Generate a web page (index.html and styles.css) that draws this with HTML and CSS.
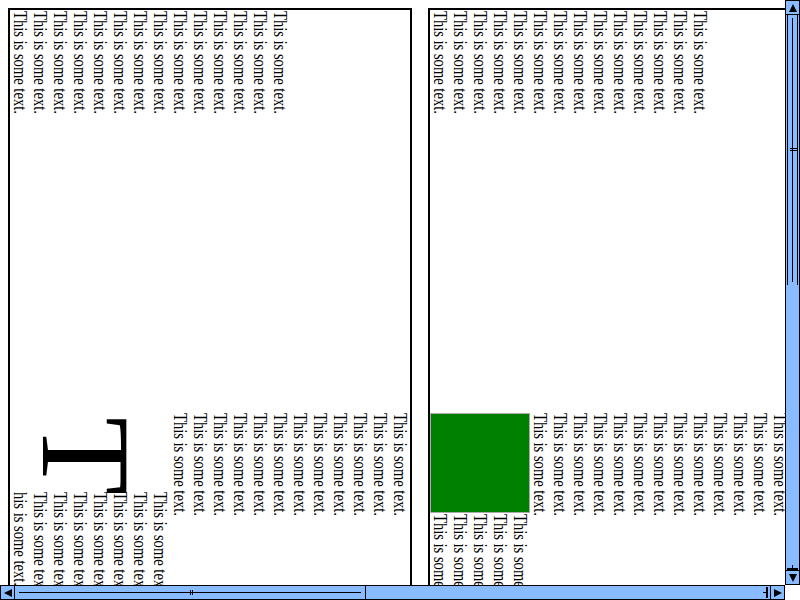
FILE: index.html
```html
<!DOCTYPE html>
<html>
<head>
<meta charset="utf-8">
<link rel="stylesheet" href="styles.css">
</head>
<body>
<div class="page">
  <div class="box box-left">
    <div class="sect-a">
      <div class="line"><span>This is some text.</span></div>
      <div class="line"><span>This is some text.</span></div>
      <div class="line"><span>This is some text.</span></div>
      <div class="line"><span>This is some text.</span></div>
      <div class="line"><span>This is some text.</span></div>
      <div class="line"><span>This is some text.</span></div>
      <div class="line"><span>This is some text.</span></div>
      <div class="line"><span>This is some text.</span></div>
      <div class="line"><span>This is some text.</span></div>
      <div class="line"><span>This is some text.</span></div>
      <div class="line"><span>This is some text.</span></div>
      <div class="line"><span>This is some text.</span></div>
      <div class="line"><span>This is some text.</span></div>
      <div class="line"><span>This is some text.</span></div>
    </div>
    <div class="sect-b">
      <div class="cap-group">
        <div class="cap"><span>T</span></div>
        <div class="beside">
          <div class="line"><span>his is some text.</span></div>
          <div class="line"><span>This is some text.</span></div>
          <div class="line"><span>This is some text.</span></div>
          <div class="line"><span>This is some text.</span></div>
          <div class="line"><span>This is some text.</span></div>
          <div class="line"><span>This is some text.</span></div>
          <div class="line"><span>This is some text.</span></div>
          <div class="line"><span>This is some text.</span></div>
        </div>
      </div>
      <div class="line"><span>This is some text.</span></div>
      <div class="line"><span>This is some text.</span></div>
      <div class="line"><span>This is some text.</span></div>
      <div class="line"><span>This is some text.</span></div>
      <div class="line"><span>This is some text.</span></div>
      <div class="line"><span>This is some text.</span></div>
      <div class="line"><span>This is some text.</span></div>
      <div class="line"><span>This is some text.</span></div>
      <div class="line"><span>This is some text.</span></div>
      <div class="line"><span>This is some text.</span></div>
      <div class="line"><span>This is some text.</span></div>
      <div class="line"><span>This is some text.</span></div>
    </div>
  </div>
  <div class="box box-right">
    <div class="sect-a">
      <div class="line"><span>This is some text.</span></div>
      <div class="line"><span>This is some text.</span></div>
      <div class="line"><span>This is some text.</span></div>
      <div class="line"><span>This is some text.</span></div>
      <div class="line"><span>This is some text.</span></div>
      <div class="line"><span>This is some text.</span></div>
      <div class="line"><span>This is some text.</span></div>
      <div class="line"><span>This is some text.</span></div>
      <div class="line"><span>This is some text.</span></div>
      <div class="line"><span>This is some text.</span></div>
      <div class="line"><span>This is some text.</span></div>
      <div class="line"><span>This is some text.</span></div>
      <div class="line"><span>This is some text.</span></div>
      <div class="line"><span>This is some text.</span></div>
    </div>
    <div class="sect-b">
      <div class="float-group">
        <div class="green"></div>
        <div class="beside">
          <div class="line"><span>This is some text.</span></div>
          <div class="line"><span>This is some text.</span></div>
          <div class="line"><span>This is some text.</span></div>
          <div class="line"><span>This is some text.</span></div>
          <div class="line"><span>This is some text.</span></div>
        </div>
      </div>
      <div class="line"><span>This is some text.</span></div>
      <div class="line"><span>This is some text.</span></div>
      <div class="line"><span>This is some text.</span></div>
      <div class="line"><span>This is some text.</span></div>
      <div class="line"><span>This is some text.</span></div>
      <div class="line"><span>This is some text.</span></div>
      <div class="line"><span>This is some text.</span></div>
      <div class="line"><span>This is some text.</span></div>
      <div class="line"><span>This is some text.</span></div>
      <div class="line"><span>This is some text.</span></div>
      <div class="line"><span>This is some text.</span></div>
      <div class="line"><span>This is some text.</span></div>
      <div class="line"><span>This is some text.</span></div>
      <div class="line"><span>This is some text.</span></div>
    </div>
  </div>
</div>

<div class="vscroll">
  <div class="arrow arrow-up"></div>
  <div class="vtrack">
    <div class="vthumb"><div class="vgrip"></div></div>
    <div class="vtail"><div class="vend"></div></div>
  </div>
  <div class="arrow arrow-down"></div>
</div>
<div class="hscroll">
  <div class="arrow arrow-left"></div>
  <div class="htrack">
    <div class="hthumb"><div class="hgrip"></div></div>
    <div class="htail"><div class="hend"></div></div>
  </div>
  <div class="arrow arrow-right"></div>
</div>
<div class="corner"></div>
</body>
</html>
```
FILE: styles.css
```css
html, body {
  margin: 0;
  padding: 0;
  overflow: hidden;
  background: #fff;
  width: 800px;
  height: 600px;
}
.page {
  display: flex;
  gap: 16px;
  padding: 8px;
  align-items: flex-start;
}
.box {
  border: 2px solid #000;
  height: 600px;
  flex: none;
  overflow: hidden;
}
.box-left { width: 400px; }
.box-right { width: 900px; }

.sect-a {
  display: flex;
  height: 402px;
}
.sect-b {
  display: flex;
  height: 200px;
}
.line {
  width: 20px;
  flex: none;
  height: 110px;
  padding-top: 1px;
}
.line span {
  display: block;
  writing-mode: vertical-lr;
  font-family: "Liberation Serif", serif;
  font-size: 18px;
  line-height: 20px;
  white-space: nowrap;
  color: #000;
  transform: scaleY(0.81);
  transform-origin: 0 0;
}
.cap-group {
  width: 160px;
  flex: none;
  display: flex;
  flex-direction: column;
}
.cap {
  height: 79px;
  flex: none;
}
.cap span {
  display: block;
  writing-mode: vertical-lr;
  font-family: "Liberation Serif", serif;
  font-size: 128px;
  line-height: 152px;
  color: #000;
  margin-top: 5px;
}
.beside {
  display: flex;
  flex: none;
}
.float-group {
  width: 100px;
  flex: none;
  display: flex;
  flex-direction: column;
}
.green {
  flex: none;
  width: 98px;
  height: 98px;
  margin-top: 1px;
  background: #008000;
  border: 1px solid #aaa;
}

/* scrollbars */
.vscroll {
  position: fixed;
  right: 0;
  top: 0;
  width: 15px;
  height: 585px;
  display: flex;
  flex-direction: column;
  background: #88bbff;
}
.hscroll {
  position: fixed;
  left: 0;
  bottom: 0;
  width: 785px;
  height: 15px;
  display: flex;
  background: #88bbff;
}
.corner {
  position: fixed;
  right: 0;
  bottom: 0;
  width: 15px;
  height: 15px;
  background: #fff;
}
.arrow {
  flex: none;
  width: 15px;
  height: 15px;
  box-sizing: border-box;
  border: 1px solid #000;
  background: #88bbff;
  position: relative;
}
.arrow::after {
  content: "";
  position: absolute;
  left: 50%;
  top: 50%;
  width: 0;
  height: 0;
}
.arrow-up::after {
  margin: -4px 0 0 -4px;
  border-left: 4px solid transparent;
  border-right: 4px solid transparent;
  border-bottom: 8px solid #000;
}
.arrow-down::after {
  margin: -4px 0 0 -4px;
  border-left: 4px solid transparent;
  border-right: 4px solid transparent;
  border-top: 8px solid #000;
}
.arrow-left::after {
  margin: -4px 0 0 -4px;
  border-top: 4px solid transparent;
  border-bottom: 4px solid transparent;
  border-right: 8px solid #000;
}
.arrow-right::after {
  margin: -4px 0 0 -4px;
  border-top: 4px solid transparent;
  border-bottom: 4px solid transparent;
  border-left: 8px solid #000;
}
.vtrack {
  flex: 1;
  display: flex;
  flex-direction: column;
  border-left: 1px solid #000;
  border-right: 1px solid #000;
}
.vthumb {
  flex: none;
  height: 270px;
  margin: 0 1px;
  border-left: 1px solid #000;
  border-right: 1px solid #000;
  position: relative;
}
.vthumb::before {
  content: "";
  position: absolute;
  left: 4px;
  top: 3px;
  bottom: 3px;
  border-left: 1px solid #000;
}
.vgrip {
  position: absolute;
  left: 2px;
  top: 133px;
  width: 7px;
  height: 3px;
  border-top: 1px solid #000;
  border-bottom: 1px solid #000;
  box-sizing: border-box;
}
.vtail {
  flex: 1;
  position: relative;
}
.vend {
  position: absolute;
  bottom: 0;
  left: 1px;
  right: 1px;
  height: 2px;
  background: #000;
}
.vend::before {
  content: "";
  position: absolute;
  left: 5px;
  bottom: 2px;
  width: 1px;
  height: 3px;
  background: #000;
}
.htrack {
  flex: 1;
  display: flex;
  border-top: 1px solid #000;
  border-bottom: 1px solid #000;
}
.hthumb {
  flex: none;
  width: 350px;
  border-right: 1px solid #000;
  position: relative;
}
.hthumb::before {
  content: "";
  position: absolute;
  left: 4px;
  right: 4px;
  top: 6px;
  border-top: 1px solid #000;
}
.hgrip {
  position: absolute;
  top: 4px;
  left: 175px;
  width: 3px;
  height: 5px;
  border-left: 1px solid #000;
  border-right: 1px solid #000;
  box-sizing: border-box;
}
.htail {
  flex: 1;
  position: relative;
}
.hend {
  position: absolute;
  right: 2px;
  top: 1px;
  width: 2px;
  height: 11px;
  background: #000;
}
.hend::before {
  content: "";
  position: absolute;
  right: 2px;
  top: 5px;
  width: 3px;
  height: 1px;
  background: #000;
}
```
